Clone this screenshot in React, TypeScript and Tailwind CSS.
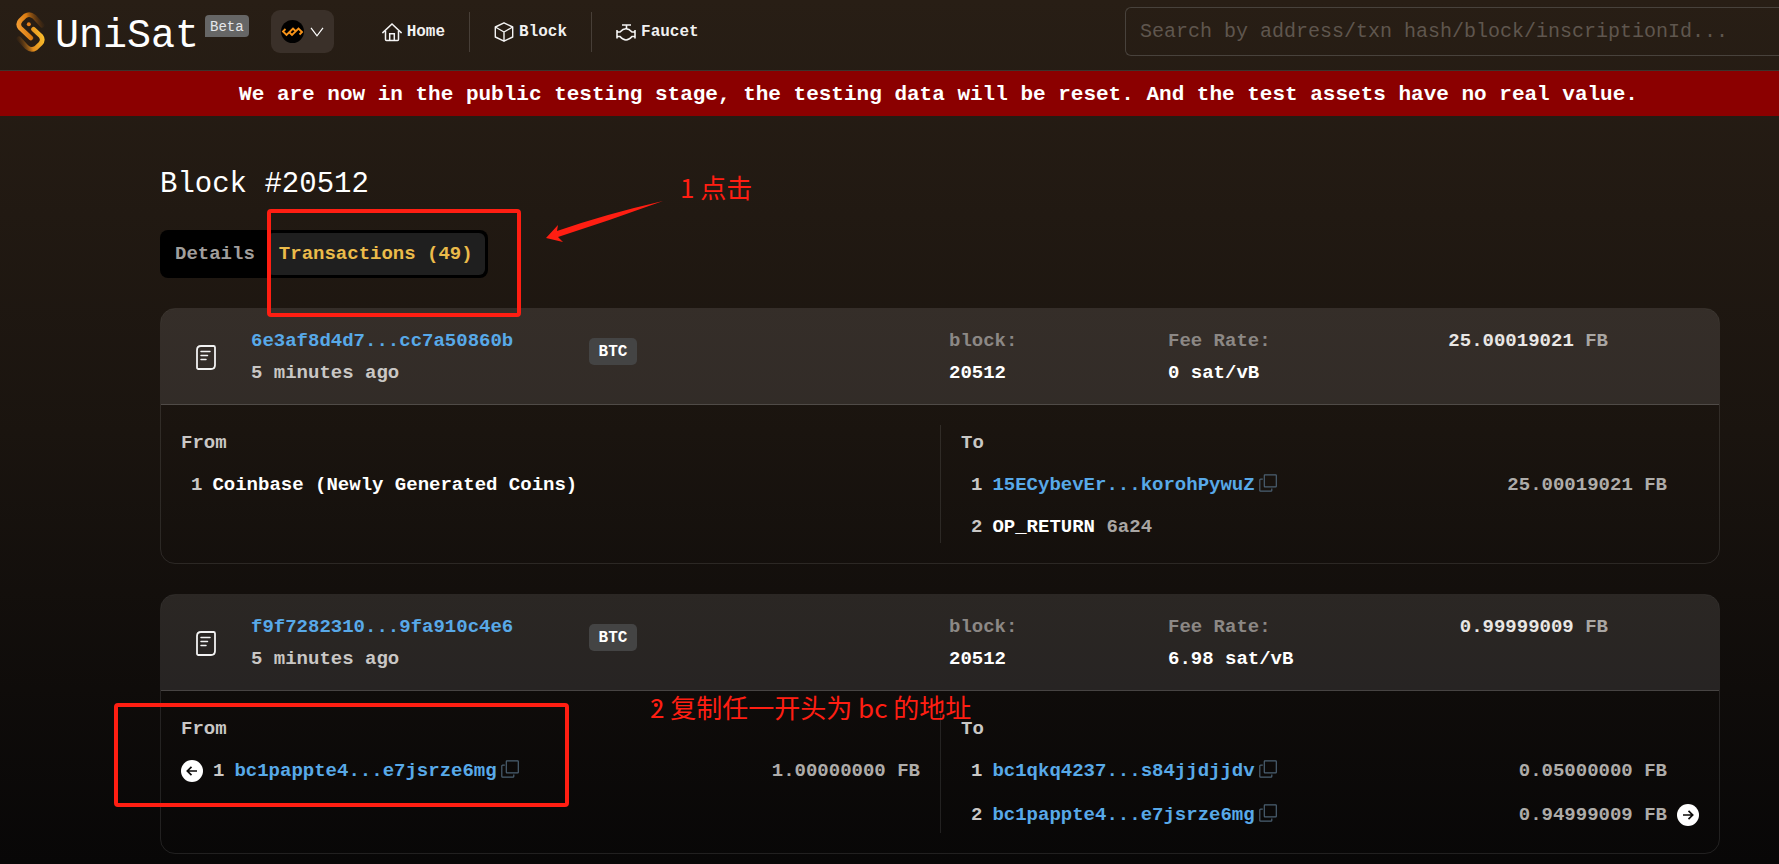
import React from 'react';

interface TxEntry {
  address?: string;
  label?: string;
  note?: string;
  amount?: string;
  linked?: boolean;
}

interface Transaction {
  hash: string;
  time: string;
  block: string;
  feeRate: string;
  amount: string;
  inputs: TxEntry[];
  outputs: TxEntry[];
}

const transactions: Transaction[] = [
  {
    hash: '6e3af8d4d7...cc7a50860b',
    time: '5 minutes ago',
    block: '20512',
    feeRate: '0 sat/vB',
    amount: '25.00019021',
    inputs: [{ label: 'Coinbase (Newly Generated Coins)' }],
    outputs: [
      { address: '15ECybevEr...korohPywuZ', amount: '25.00019021' },
      { label: 'OP_RETURN', note: '6a24' },
    ],
  },
  {
    hash: 'f9f7282310...9fa910c4e6',
    time: '5 minutes ago',
    block: '20512',
    feeRate: '6.98 sat/vB',
    amount: '0.99999009',
    inputs: [{ address: 'bc1pappte4...e7jsrze6mg', amount: '1.00000000', linked: true }],
    outputs: [
      { address: 'bc1qkq4237...s84jjdjjdv', amount: '0.05000000' },
      { address: 'bc1pappte4...e7jsrze6mg', amount: '0.94999009', linked: true },
    ],
  },
];

const Logo = () => (
  <svg width="29" height="40" viewBox="0 0 86 120" fill="none" strokeWidth="14" strokeLinecap="round">
    <defs>
      <linearGradient id="logo-a" x1="0" y1="50" x2="84" y2="30" gradientUnits="userSpaceOnUse">
        <stop offset="0" stopColor="#f7a238" />
        <stop offset="0.45" stopColor="#d97a10" />
        <stop offset="1" stopColor="#5a3210" stopOpacity="0.1" />
      </linearGradient>
      <linearGradient id="logo-b" x1="84" y1="70" x2="2" y2="90" gradientUnits="userSpaceOnUse">
        <stop offset="0" stopColor="#fbc02d" />
        <stop offset="0.5" stopColor="#e08a1c" />
        <stop offset="1" stopColor="#5a3210" stopOpacity="0.1" />
      </linearGradient>
    </defs>
    <path d="M78 40 L54 14 Q41 3 28 11 L13 25 Q3 36 12 48 L44 78" stroke="url(#logo-a)" />
    <path d="M8 80 L32 106 Q45 117 58 109 L73 95 Q83 84 74 72 L52 52" stroke="url(#logo-b)" />
    <circle cx="38" cy="37" r="6" fill="#e8801a" />
  </svg>
);

const ChainIcon = () => (
  <svg width="23" height="23" viewBox="0 0 23 23" fill="none">
    <circle cx="11.5" cy="11.5" r="11.5" fill="#000" />
    <path
      d="M4.5 9 L2 11.5 L5.5 15 L12 8.5 L14.5 11 M18.5 14.5 L21 12 L17.5 8.5 L11 15 L8.5 12.5"
      stroke="#f7931a"
      strokeWidth="1.9"
    />
  </svg>
);

const HomeIcon = () => (
  <svg width="20" height="20" viewBox="0 0 20 20" fill="none" stroke="currentColor" strokeWidth="1.5">
    <path d="M.8 10.6 L10 2 L19.2 10.6" strokeLinecap="round" />
    <path d="M3.5 9 V17.5 Q3.5 18.5 4.5 18.5 H15.5 Q16.5 18.5 16.5 17.5 V9" />
    <path d="M7.7 18.5 V11.8 H12.3 V18.5" />
  </svg>
);

const BlockIcon = () => (
  <svg width="20" height="20" viewBox="0 0 20 20" fill="none" stroke="currentColor" strokeWidth="1.4" strokeLinejoin="round">
    <path d="M10 .8 L18.7 5 V15 L10 19.2 L1.3 15 V5 Z" />
    <path d="M1.3 5 L10 10 L18.7 5 M10 10 V19.2" />
  </svg>
);

const FaucetIcon = () => (
  <svg width="20" height="20" viewBox="0 0 20 20" fill="none" stroke="currentColor" strokeWidth="1.6">
    <path d="M6 3 H15 M10.5 3 V7" />
    <path d="M1 8 V16.5 M19 8 V16.5" />
    <path d="M1 10 H4 Q7 6.8 10 6.8 Q13 6.8 16 10 H19 M1 14.5 H4 Q7 18 10 18 Q13 18 16 14.5 H19" />
  </svg>
);

const TxIcon = () => (
  <svg width="20" height="25" viewBox="0 0 20 25" fill="none" stroke="#f2f2f2" strokeLinecap="round">
    <path d="M5 1 H17.5 Q19 1 19 2.5 V20 Q19 24 15 24 H2.5 Q1 24 1 22.5 V5 Q1 1 5 1 Z" strokeWidth="1.8" />
    <path d="M5 6.5 H14 M5 10.5 H11.5 M5 14.5 H10" strokeWidth="1.5" />
  </svg>
);

const CopyIcon = () => (
  <svg width="18" height="18" viewBox="0 0 18 18" fill="none" stroke="#4b6072" strokeWidth="1.2">
    <rect x="5.3" y=".8" width="12" height="12" rx=".6" />
    <path d="M3.8 5.2 H1.6 Q.8 5.2 .8 6 V16.4 Q.8 17.2 1.6 17.2 H12 Q12.8 17.2 12.8 16.4 V14.6" />
  </svg>
);

const ArrowBadge = ({ direction }: { direction: 'left' | 'right' }) => (
  <svg width="22" height="22" viewBox="0 0 22 22" fill="none">
    <circle cx="11" cy="11" r="11" fill="#fff" />
    <path
      d={direction === 'left' ? 'M16 11 H6.5 M10.5 6.8 L6.3 11 L10.5 15.2' : 'M6 11 H15.5 M11.5 6.8 L15.7 11 L11.5 15.2'}
      stroke="#0b0a09"
      strokeWidth="1.7"
    />
  </svg>
);

const navItems = [
  { label: 'Home', icon: <HomeIcon /> },
  { label: 'Block', icon: <BlockIcon /> },
  { label: 'Faucet', icon: <FaucetIcon /> },
];

const Header = () => (
  <header className="h-[71px] shrink-0 flex items-start border-b border-white/10">
    <a href="#" className="flex items-start pl-4 pt-3">
      <Logo />
      <span className="ml-[10px] text-[40px] leading-[50px] text-white">UniSat</span>
    </a>
    <span className="ml-[6px] mt-[15px] h-[22px] px-[5px] rounded-t-[4px] rounded-br-[4px] bg-[#666] text-sm leading-6 text-gray-200">
      Beta
    </span>
    <button
      type="button"
      aria-label="Network"
      className="ml-[22px] mt-[10px] w-[63px] h-[43px] rounded-[9px] bg-[#3a3029] flex items-center pl-[10px] gap-[6px]"
    >
      <ChainIcon />
      <svg width="14" height="10" viewBox="0 0 14 10" fill="none" stroke="#fff" strokeWidth="1.2">
        <path d="M1 .8 L7 8.8 L13 .8" />
      </svg>
    </button>
    <nav className="ml-6 mt-3 flex divide-x divide-white/15">
      {navItems.map((item) => (
        <a
          key={item.label}
          href="#"
          className="h-10 px-6 flex items-center gap-[5px] text-base font-bold text-white/95"
        >
          {item.icon}
          {item.label}
        </a>
      ))}
    </nav>
    <input
      type="text"
      aria-label="Search"
      placeholder="Search by address/txn hash/block/inscriptionId..."
      className="ml-auto mt-[7px] w-[654px] h-[49px] pl-[14px] rounded-l-[6px] border border-r-0 border-[#48423c] bg-transparent text-xl text-white placeholder:text-[#5f564e] outline-none"
    />
  </header>
);

const EntryRow = ({ entry, index, side }: { entry: TxEntry; index: number; side: 'from' | 'to' }) => (
  <div className="flex items-center gap-[10px] min-h-6">
    {side === 'from' && entry.linked && <ArrowBadge direction="left" />}
    <div className={`flex items-center flex-1 gap-[10px] ${side === 'from' && entry.linked ? '' : 'pl-[10px]'}`}>
      <span className="text-[#c9c7c5]">{index}</span>
      {entry.address ? (
        <span className="flex items-center gap-1">
          <a href="#" className="text-[#58a9e8]">{entry.address}</a>
          <button type="button" aria-label="Copy address" className="pb-1">
            <CopyIcon />
          </button>
        </span>
      ) : (
        <span className="text-white">
          {entry.label} {entry.note && <span className="text-[#a9a6a3]">{entry.note}</span>}
        </span>
      )}
      {entry.amount && <span className="ml-auto text-[#aeaca9]">{entry.amount} FB</span>}
    </div>
    {side === 'to' && (
      <span className={`w-[22px] flex items-center ${entry.linked ? 'h-7' : ''}`}>
        {entry.linked && <ArrowBadge direction="right" />}
      </span>
    )}
  </div>
);

const EntryColumn = ({ title, entries, side }: { title: string; entries: TxEntry[]; side: 'from' | 'to' }) => (
  <div className={`px-5 pb-1 ${side === 'to' ? 'border-l border-white/10' : ''}`}>
    <h2 className="leading-9 text-[#c9c7c5]">{title}</h2>
    <div className="mt-3 flex flex-col gap-[18px]">
      {entries.map((entry, i) => (
        <EntryRow key={i} entry={entry} index={i + 1} side={side} />
      ))}
    </div>
  </div>
);

const TransactionCard = ({ tx }: { tx: Transaction }) => (
  <article className="rounded-[15px] border border-white/10 overflow-hidden text-[19px] leading-6 font-bold">
    <div className="grid grid-cols-[90px_338fr_360fr_219fr_160fr_280fr] pt-4 pb-[15px] pr-[111px] leading-8 bg-white/10 border-b border-white/15">
      <div className="pl-[35px] flex items-center">
        <TxIcon />
      </div>
      <div>
        <a href="#" className="block text-[#58a9e8]">{tx.hash}</a>
        <p className="text-[#c9c7c5]">{tx.time}</p>
      </div>
      <div className="pt-[13px]">
        <span className="block w-12 h-[27px] rounded-[5px] bg-[#444] text-center text-base leading-7 text-white">
          BTC
        </span>
      </div>
      <div>
        <p className="text-[#8c8885]">block:</p>
        <p className="text-white">{tx.block}</p>
      </div>
      <div>
        <p className="text-[#8c8885]">Fee Rate:</p>
        <p className="text-white">{tx.feeRate}</p>
      </div>
      <p className="text-right text-[#e8e6e4]">
        {tx.amount} <span className="text-[#a9a6a3]">FB</span>
      </p>
    </div>
    <div className="grid grid-cols-2 py-5">
      <EntryColumn title="From" entries={tx.inputs} side="from" />
      <EntryColumn title="To" entries={tx.outputs} side="to" />
    </div>
  </article>
);

const Annotations = () => (
  <div className="absolute inset-0 pointer-events-none text-[26px] leading-8 text-[#ff1e12] font-['Noto_Sans_CJK_SC',sans-serif]">
    <div className="absolute left-[267px] top-[209px] w-[254px] h-[108px] border-4 border-[#ff1e12] rounded-[4px]" />
    <svg className="absolute left-[546px] top-[200px]" width="118" height="44" viewBox="0 0 118 44" fill="#ff1e12">
      <path d="M0 38 L12 25 L11 31 Q60 14 117 1 Q65 20 12 37 L17 42 Z" />
    </svg>
    <p className="absolute left-[680px] top-[171px] whitespace-nowrap">1 点击</p>
    <div className="absolute left-[114px] top-[703px] w-[455px] h-[104px] border-4 border-[#ff1e12] rounded-[4px]" />
    <p className="absolute left-[650px] top-[691px] whitespace-nowrap">2 复制任一开头为 bc 的地址</p>
    <span className="absolute left-[654px] top-[703px] size-1 rounded-full bg-[#ff1e12]" />
  </div>
);

const App: React.FC = () => {
  return (
    <div className="relative min-h-screen overflow-hidden flex flex-col bg-linear-to-b from-[#281e15] via-[#1a140f] to-[#080707] font-['Liberation_Mono',monospace]">
      <Header />
      <div className="h-[45px] shrink-0 pl-[98px] bg-[#8b0000] text-center text-[21px] leading-[48px] font-bold text-white whitespace-nowrap">
        We are now in the public testing stage, the testing data will be reset. And the test assets have no real value.
      </div>

      <main className="pl-40 pr-[59px] pt-[51px] pb-[10px]">
        <h1 className="text-[29px] leading-9 text-white">Block #20512</h1>

        <div className="mt-[27px] inline-flex p-[3px] rounded-[8px] bg-black text-[19px] font-bold">
          <button type="button" className="h-[42px] px-3 rounded-[6px] text-[#a09e9c]">
            Details
          </button>
          <button type="button" className="h-[42px] px-3 rounded-[6px] bg-[#1f1f1f] text-[#ebbb4a]">
            Transactions (49)
          </button>
        </div>

        <div className="mt-[30px] flex flex-col gap-[30px]">
          {transactions.map((tx) => (
            <TransactionCard key={tx.hash} tx={tx} />
          ))}
        </div>
      </main>

      <Annotations />
    </div>
  );
};

export default App;
